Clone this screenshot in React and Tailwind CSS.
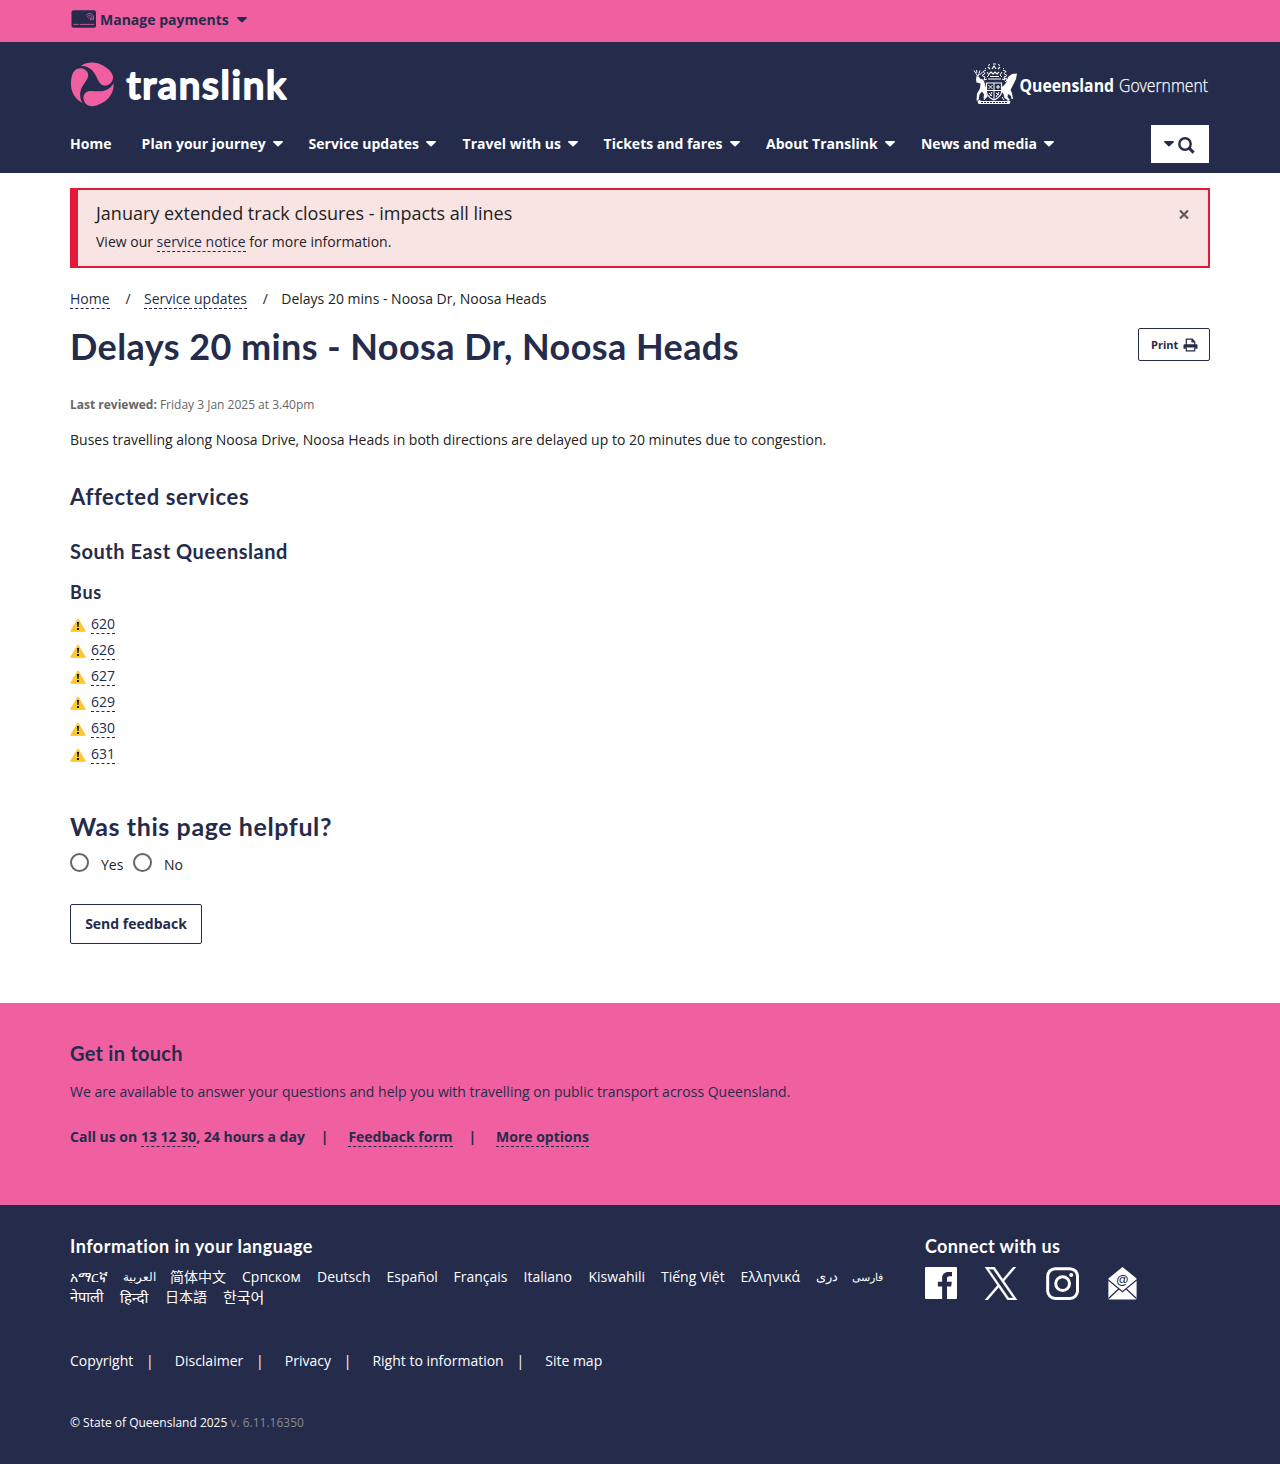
import React from "react";

const Caret = ({ className = "" }) => (
  <svg viewBox="0 0 10 6" className={`h-[6px] w-[10px] shrink-0 ${className}`} fill="currentColor">
    <path d="M.8 0h8.4c.7 0 1 .8.5 1.3L5.6 5.2a.9.9 0 0 1-1.2 0L.3 1.3C-.2.8.1 0 .8 0Z" />
  </svg>
);

const SearchIcon = () => (
  <svg viewBox="0 0 17 17" className="mt-0.5 h-[17px] w-[17px]" fill="none" stroke="currentColor">
    <circle cx="7" cy="7" r="5.700" strokeWidth="2.400" />
    <path d="m11.200 11.200 4.400 4.400" strokeWidth="3" />
  </svg>
);

const PrintIcon = () => (
  <svg viewBox="0 0 15 14" className="ml-[5px] h-[14px] w-[15px]" fill="none" stroke="currentColor">
    <path d="M3.300 7V1.200h5.900l2.500 2.500V7M9 1.200v2.700h2.700" strokeWidth="1.200" />
    <path d="M1.500 6.200h12a1 1 0 0 1 1 1v3.600h-2.300V9.600H2.800v1.200H.5V7.200a1 1 0 0 1 1-1Z" fill="currentColor" stroke="none" />
    <path d="M3.300 9.600v3.200h8.400V9.600" strokeWidth="1.200" />
  </svg>
);

const CardIcon = () => (
  <svg viewBox="0 0 26 18" className="h-[18px] w-[26px]">
    <rect x=".5" y="0.300" width="24.500" height="17.400" rx="2" fill="#252b4b" />
    <g fill="none" stroke="#f060a1" strokeWidth="0.800">
      <path d="M2.500 14.400h5M8.800 14.400h14.400" />
      <path d="M15.400 5.400c1.600-2.800 5.600-2.600 7 1v3.400M16.200 7.200c1.200-2.400 4.200-2.200 4.800 .4v2.600M17.600 8.400c.6-1.400 1.800-1 2 .4v1.600" />
    </g>
  </svg>
);

const SWIRL =
  "M-30 57C-52 45-64 24-64 0C-64-17-61-31-54-39C-47-47-37-49-28-46C-16-42-10-32-13-21C-16-11-25-2-31 10C-38 24-39 41-30 57Z";

const TranslinkLogo = () => (
  <svg viewBox="0 0 218 46" className="h-[46px] w-[218px]">
    <g transform="translate(22.3 22) scale(.3333)" fill="#f060a1">
      <path d={SWIRL} />
      <path d={SWIRL} transform="rotate(120)" />
      <path d={SWIRL} transform="rotate(240)" />
    </g>
    <text
      x="56.500" y="36.800" textLength="159.500" lengthAdjust="spacing"
      fill="#fff" stroke="#fff" strokeWidth="1.900" strokeLinejoin="round"
      className="font-['Lato',sans-serif] text-[38.500px] font-semibold"
    >
      translink
    </text>
  </svg>
);

const GovernmentLogo = () => (
  <svg viewBox="0 0 237 46" className="h-[46px] w-[237px]">
    <g fill="#fff">
      {/* stag */}
      <path d="M3.500 14l2.500 1 1.500 2 2.500 .5 1.500 3 1 4 2 4-1 3 1 3-2 2h-2l.5-4-2-3-2.500 3-1 6H3.500l.5-7 3-5 .5-5-4-1-.5-3Z" />
      {/* crane */}
      <path d="M44 11.500l-5 .5-4 3-2 6-3.500 4-1-3-1.500 1 1 6 2.500 3 1 4 3 2h2.500l-2.500-3 .5-3 3 2 .5 3h1.500l-1-6-1.500-3 2.500-5 3-6Z" />
      {/* compartment */}
      <path d="M4.500 39.500l2-1.500 2 1h25l2-1 2 1.500-1 2.500h-31Z" />
    </g>
    <path d="M8 40.500h26" stroke="#252b4b" strokeWidth="1" strokeDasharray="2 1" />
    <path d="M13.500 21h15v9c0 4-3.500 6-7.500 8-4-2-7.500-4-7.500-8Z" fill="#252b4b" stroke="#fff" strokeWidth="1.200" />
    <g fill="none" stroke="#fff" strokeWidth="1">
      <path d="M21 21v16M14 28.500h14M15.500 23l4 4M19.500 23l-4 4M23 25h4M25 23v4M16 31l3 3M19 30l-2 4M23 31l3 2M26 30l-3 5" />
      <path d="M15 17h13M17 14.500h9M16 12l2-2 2 2 2-2 2 2 2-2M19 7l2-3 2 3M17 7l-2-2M25 7l2-2" strokeWidth="1.200" />
      <path d="M13 8l-3 1.500 2 2-3 2 3 1.500-1 3 3-1M30 8l3 1.500-2 2 3 2-3 1.500 1 3-3-1M14 10l2 3-2 2M29 10l-2 3 2 2" />
      <path d="M15 3.500l2-1M27 3.500l-2-1M20 2h3M12 6l1 1M31 6l-1 1" />
      <path d="M1 8.500l2 3 2 3M3.500 8l.5 3M7 8.500l-1 3-1 3M9.500 10l-3 3" />
      <path d="M31 17l2-1 1 2-2 2M13 35l-2 3M29 35l2 3" />
    </g>
    <text x="46.500" y="30.300" textLength="94.500" lengthAdjust="spacingAndGlyphs" fill="#fff" className="font-['Open_Sans',sans-serif] text-[18px] font-bold">
      Queensland
    </text>
    <text x="146" y="30.300" textLength="89" lengthAdjust="spacingAndGlyphs" fill="#fff" className="font-['Open_Sans',sans-serif] text-[18px] font-light" stroke="#fff" strokeWidth=".25">
      Government
    </text>
  </svg>
);

const WarningIcon = () => (
  <svg viewBox="0 0 16 14" className="h-[14px] w-4 shrink-0">
    <path d="M8 .8 15.400 13.300H.6Z" fill="#ffc72c" stroke="#ffc72c" strokeLinejoin="round" />
    <path d="M6.900 4h2.200l-.5 5H7.400ZM7 10h2v1.900H7Z" fill="#1a1a1a" />
  </svg>
);

const Facebook = () => (
  <svg viewBox="0 0 32 32" className="h-8 w-8" fill="#fff">
    <path d="M1 0h30A1 1 0 0 1 32 1v30a1 1 0 0 1-1 1H22V19.600h4.200l.6-4.800H22v-3.100c0-1.400.4-2.400 2.400-2.400H27V5.100c-.4-.1-2-.2-3.700-.2-3.700 0-6.200 2.200-6.200 6.300v3.600h-4.200v4.800h4.200V32H1a1 1 0 0 1-1-1V1A1 1 0 0 1 1 0Z" />
  </svg>
);

const XLogo = () => (
  <svg viewBox="0 0 1200 1227" className="-ml-px h-[33px] w-[34px]" fill="#fff" stroke="#fff" strokeWidth="12">
    <path d="M714.163 519.284L1160.890 0H1055.030L667.137 450.887L357.328 0H0L468.492 681.821L0 1226.370H105.866L515.491 750.218L842.672 1226.370H1200L714.137 519.284H714.163ZM569.165 687.828L521.697 619.934L144.011 79.694H306.615L611.412 515.685L658.880 583.579L1055.080 1150.300H892.476L569.165 687.854V687.828Z" />
  </svg>
);

const Instagram = () => (
  <svg viewBox="0 0 33 33" className="h-[33px] w-[33px]" fill="none" stroke="#fff" strokeWidth="3">
    <rect x="1.700" y="1.700" width="29.800" height="29.800" rx="7.500" />
    <circle cx="16.600" cy="16.600" r="6.900" />
    <circle cx="25.200" cy="8" r="2" fill="#fff" stroke="none" />
  </svg>
);

const Email = () => (
  <svg viewBox="0 0 29 33" className="h-[33px] w-[29px]">
    <path d="M14.500 0 28.600 11.500v20a1 1 0 0 1-1 1H1.400a1 1 0 0 1-1-1v-20Z" fill="#fff" />
    <path d="M0 12.700 14.500 24.800 29 12.700M.5 31.500 11 21.800M28.500 31.500 18 21.800" fill="none" stroke="#252b4b" strokeWidth="1.200" />
    <text x="14.300" y="17" textAnchor="middle" fill="#252b4b" className="font-['Liberation_Sans',sans-serif] text-[12.500px] font-bold">@</text>
  </svg>
);

const NAV = [
  ["Plan your journey", "w-[167px]"],
  ["Service updates", "w-[154px]"],
  ["Travel with us", "w-[141px]"],
  ["Tickets and fares", "w-[162.400px]"],
  ["About Translink", "w-[155px]"],
  ["News and media", "w-[140px]"],
];

const LANGUAGES = [
  ["አማርኛ", "w-[53px]"],
  ["العربية", "w-[47px] text-[12px]"],
  ["简体中文", "w-[72px]"],
  ["Српском", "w-[75px]"],
  ["Deutsch", "w-[69.500px]"],
  ["Español", "w-[67px]"],
  ["Français", "w-[70px]"],
  ["Italiano", "w-[65px]"],
  ["Kiswahili", "w-[72.500px]"],
  ["Tiếng Việt", "w-[79.600px]"],
  ["Ελληνικά", "w-[75px]"],
  ["دری", "w-[36px] text-[12.500px]"],
  ["فارسی", "w-[40px] text-[10.500px]"],
  ["नेपाली", "w-[50px] text-[14.500px]"],
  ["हिन्दी", "w-[45px] text-[15px]"],
  ["日本語", "w-[58px]"],
  ["한국어", "w-[50px] text-[15px]"],
];

const Link = ({ children }) => (
  <a href="#" className="border-b border-dashed border-[#252b4b] text-[#252b4b]">{children}</a>
);

const Container = ({ className = "", children }) => (
  <div className={`mx-auto w-[1140px] ${className}`}>{children}</div>
);

const HEADING = "font-['Lato',sans-serif] font-bold text-[#252b4b]";

export default function App() {
  return (
    <div className="h-[1464px] overflow-hidden bg-white font-['Open_Sans','Noto_Sans','Noto_Sans_CJK_SC',sans-serif] text-[14px] leading-5 text-[#222]">
      <div className="h-[42px] bg-[#f060a1]">
        <Container className="flex">
          <div className="mt-2.5 flex h-5 items-center font-bold text-[#252b4b]">
            <span className="-mt-[3px] mr-[3px] ml-px"><CardIcon /></span>
            Manage payments
            <Caret className="-mt-px ml-2" />
          </div>
        </Container>
      </div>

      <header className="h-[131px] bg-[#252b4b] text-white">
        <Container>
          <div className="flex h-[83px] justify-between pt-5">
            <TranslinkLogo />
            <GovernmentLogo />
          </div>
          <nav className="flex h-[38px] items-start font-bold">
            <a href="#" className="mt-[9px] w-[71.600px]">Home</a>
            {NAV.map(([label, width]) => (
              <a key={label} href="#" className={`mt-[9px] flex items-center whitespace-nowrap ${width}`}>
                {label}
                <Caret className="ml-[7.300px]" />
              </a>
            ))}
            <button className="mr-px ml-auto flex h-[38px] w-[58px] items-center bg-white pt-px pl-[13px] text-[#252b4b]">
              <Caret className="-mt-px mr-1" />
              <SearchIcon />
            </button>
          </nav>
        </Container>
      </header>

      <main>
        <Container className="h-[830px] pt-[15px]">
          <div className="flex h-20 justify-between border-2 border-l-8 border-[#e41937] bg-[#f8e4e3] pr-[18px] pl-[18px]">
            <div>
              <h2 className="mt-2.5 text-[18px] leading-[26px]">January extended track closures - impacts all lines</h2>
              <p className="mt-1.5">View our <Link>service notice</Link> for more information.</p>
            </div>
            <svg viewBox="0 0 12 12" className="mt-[18px] h-3 w-3">
              <path d="m2 2.500 8 8M10 2.500l-8 8" stroke="#635b5b" strokeWidth="2.300" />
            </svg>
          </div>

          <div className="mt-[21px] flex">
            <span><Link>Home</Link></span>
            <span className="mr-[13.500px] ml-[15.800px]">/</span>
            <span><Link>Service updates</Link></span>
            <span className="mr-[13.500px] ml-[15.600px]">/</span>
            <span>Delays 20 mins - Noosa Dr, Noosa Heads</span>
          </div>

          <div className="mt-[15px] flex items-start justify-between">
            <h1 className={`${HEADING} text-[36px] leading-[44px] tracking-[0.42px]`}>Delays 20 mins - Noosa Dr, Noosa Heads</h1>
            <button className="mt-1 flex h-[33px] w-[72px] items-center rounded-xs border border-[#252b4b] pl-3 text-[11px] font-bold text-[#252b4b]">
              Print
              <PrintIcon />
            </button>
          </div>

          <p className="mt-[27px] text-[12px] text-[#666]">
            <b>Last reviewed:</b> Friday 3 Jan 2025 at 3.40pm
          </p>
          <p className="mt-[15px]">
            Buses travelling along Noosa Drive, Noosa Heads in both directions are delayed up to 20 minutes due to congestion.
          </p>

          <h2 className={`${HEADING} mt-[33px] text-[22px] leading-7 tracking-[0.6px]`}>Affected services</h2>
          <h3 className={`${HEADING} mt-7 text-[20px] leading-6 tracking-[0.55px]`}>South East Queensland</h3>
          <h4 className={`${HEADING} mt-[17px] text-[18px] leading-6 tracking-[0.7px]`}>Bus</h4>
          <ul className="mt-2.5">
            {["620", "626", "627", "629", "630", "631"].map((route) => (
              <li key={route} className="flex h-[26px] gap-[5px]">
                <span className="pt-1"><WarningIcon /></span>
                <span><Link>{route}</Link></span>
              </li>
            ))}
          </ul>

          <h2 className={`${HEADING} mt-[41px] text-[25px] leading-[30px] tracking-[0.59px]`}>Was this page helpful?</h2>
          <div className="mt-3 flex h-6">
            <i className="h-[19px] w-[19px] rounded-full border-2 border-[#666]" />
            <span className="mt-0.5 ml-3 w-8">Yes</span>
            <i className="h-[19px] w-[19px] rounded-full border-2 border-[#666]" />
            <span className="mt-0.5 ml-3">No</span>
          </div>
          <button className="mt-[27px] flex h-10 w-[132px] items-center justify-center rounded-xs border border-[#252b4b] font-bold text-[#252b4b]">
            Send feedback
          </button>
        </Container>
      </main>

      <section className="h-[202px] bg-[#f060a1] pt-[38px] text-[#252b4b]">
        <Container>
          <h2 className={`${HEADING} text-[20px] leading-6 tracking-[0.27px]`}>Get in touch</h2>
          <p className="mt-[17px]">We are available to answer your questions and help you with travelling on public transport across Queensland.</p>
          <div className="mt-[25px] flex font-bold">
            <span>Call us on <Link>13 12 30</Link>, 24 hours a day</span>
            <span className="mr-[19.800px] ml-4">|</span>
            <span><Link>Feedback form</Link></span>
            <span className="mr-[19.800px] ml-4">|</span>
            <span><Link>More options</Link></span>
          </div>
        </Container>
      </section>

      <footer className="h-[259px] bg-[#252b4b] pt-[29px] text-white">
        <Container>
          <div className="flex">
            <div className="w-[855px]">
              <h2 className="font-['Lato',sans-serif] text-[18px] leading-6 font-bold tracking-[0.49px]">Information in your language</h2>
              <div className="mt-[9px] flex w-[840px] flex-wrap">
                {LANGUAGES.map(([name, style]) => (
                  <a key={name} href="#" className={`h-5 whitespace-nowrap leading-5 ${style}`}>{name}</a>
                ))}
              </div>
            </div>
            <div>
              <h2 className="font-['Lato',sans-serif] text-[18px] leading-6 font-bold tracking-[0.38px]">Connect with us</h2>
              <div className="mt-[9px] flex">
                <a href="#" className="w-[60px]"><Facebook /></a>
                <a href="#" className="w-[61px]"><XLogo /></a>
                <a href="#" className="w-[62px]"><Instagram /></a>
                <a href="#"><Email /></a>
              </div>
            </div>
          </div>
          <div className="mt-11 flex">
            {["Copyright", "Disclaimer", "Privacy", "Right to information"].map((label) => (
              <span key={label} className="flex">
                <a href="#">{label}</a>
                <span className="mr-[21px] ml-[12.800px]">|</span>
              </span>
            ))}
            <a href="#">Site map</a>
          </div>
          <p className="mt-[42px] text-[12px]">
            © State of Queensland 2025 <span className="text-[#8b8b8b]">v. 6.11.16350</span>
          </p>
        </Container>
      </footer>
    </div>
  );
}
